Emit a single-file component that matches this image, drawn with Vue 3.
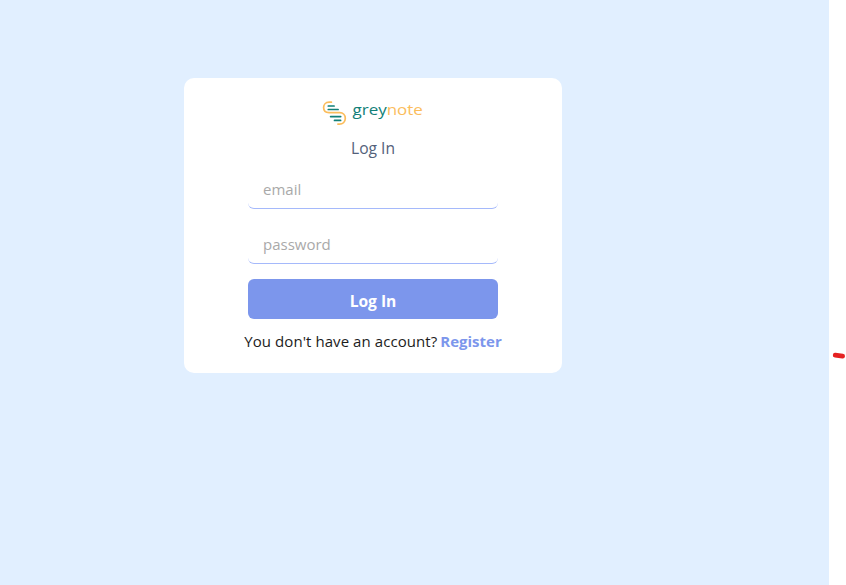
<script setup>
import { ref } from 'vue'

const email = ref('')
const password = ref('')
</script>

<template>
  <div class="layout">
    <main class="page">
      <form class="card" @submit.prevent>
        <svg class="logo" width="104" height="30" viewBox="0 0 104 30" aria-label="greynote">
          <g fill="none" stroke-linecap="round">
            <path
              d="M9.4 4.2 H7.2 C3.2 4.2 1.6 7.2 1.6 9.5 C1.6 12.8 4 14.6 7 14.6 H17.7 C21.2 14.6 23.3 17.2 23.3 20.2 C23.3 24.1 20.6 26.1 17.4 26.1 H15.9"
              stroke="#fbbd5c"
              stroke-width="1.7"
            />
            <path d="M6.3 8 H12.1 M6.3 11.5 H16.1 M8.6 18.6 H18.7 M12.5 22.4 H18.6" stroke="#128078" stroke-width="1.7" />
          </g>
          <text class="wordmark" x="30.5" y="17.1" textLength="70.4" lengthAdjust="spacingAndGlyphs"><tspan fill="#128078">grey</tspan><tspan fill="#fbbd5c">note</tspan></text>
        </svg>
        <h1 class="title">Log In</h1>
        <input v-model="email" class="field field-email" type="email" placeholder="email" />
        <input v-model="password" class="field field-password" type="password" placeholder="password" />
        <button class="submit" type="submit">Log In</button>
        <p class="signup">
          <span class="question">You don't have an account?</span>
          <a class="register">Register</a>
        </p>
      </form>
    </main>
    <aside class="gutter">
      <svg width="17" height="12" viewBox="0 0 17 12">
        <path d="M6.2 5.2 L13.6 6.2" fill="none" stroke="#e52222" stroke-width="4.8" stroke-linecap="round" />
      </svg>
    </aside>
  </div>
</template>

<style>
body {
  margin: 0;
}
</style>

<style scoped>
.layout {
  display: flex;
  height: 585px;
  background: #fff;
  font-family: "Open Sans", "Noto Sans", sans-serif;
  font-size: 15px;
  font-weight: 400;
}
.page {
  width: 829px;
  box-sizing: border-box;
  padding: 78px 0 0 184px;
  background: #e1efff;
}
.card {
  box-sizing: border-box;
  width: 378px;
  height: 295px;
  padding-top: 20px;
  display: flex;
  flex-direction: column;
  align-items: center;
  background: #fff;
  border-radius: 10px;
}
.logo {
  display: block;
  flex: none;
  margin-left: 2px;
}
.wordmark {
  font-family: "Open Sans", sans-serif;
  font-size: 15px;
  font-weight: 500;
}
.title {
  margin: 9px 0 0;
  height: 22px;
  line-height: 22px;
  font-size: 15.6px;
  font-weight: 400;
  color: #53617a;
}
.field {
  box-sizing: border-box;
  width: 250px;
  height: 40px;
  padding: 0 15px;
  border: 0;
  border-bottom: 1px solid #a5b9fb;
  border-radius: 6px;
  background: #fff;
  outline: 0;
  font: inherit;
  color: #222;
}
.field::placeholder {
  color: #a9a9a9;
  opacity: 1;
}
.field-email {
  margin-top: 10px;
}
.field-password {
  margin-top: 15px;
}
.submit {
  width: 250px;
  height: 40px;
  margin-top: 15px;
  padding: 3px 0 0;
  border: 0;
  border-radius: 6px;
  background: #7c96ec;
  color: #fff;
  font: inherit;
  font-size: 15.6px;
  font-weight: 700;
}
.signup {
  display: flex;
  gap: 3px;
  margin: 11px 0 0;
  line-height: 22px;
  white-space: nowrap;
  color: #1c1c1c;
}
.question {
  letter-spacing: 0.07px;
}
.register {
  color: #7c96ec;
  font-weight: 700;
}
.gutter {
  width: 17px;
  padding-top: 350px;
  box-sizing: border-box;
}
.gutter svg {
  display: block;
}
</style>
